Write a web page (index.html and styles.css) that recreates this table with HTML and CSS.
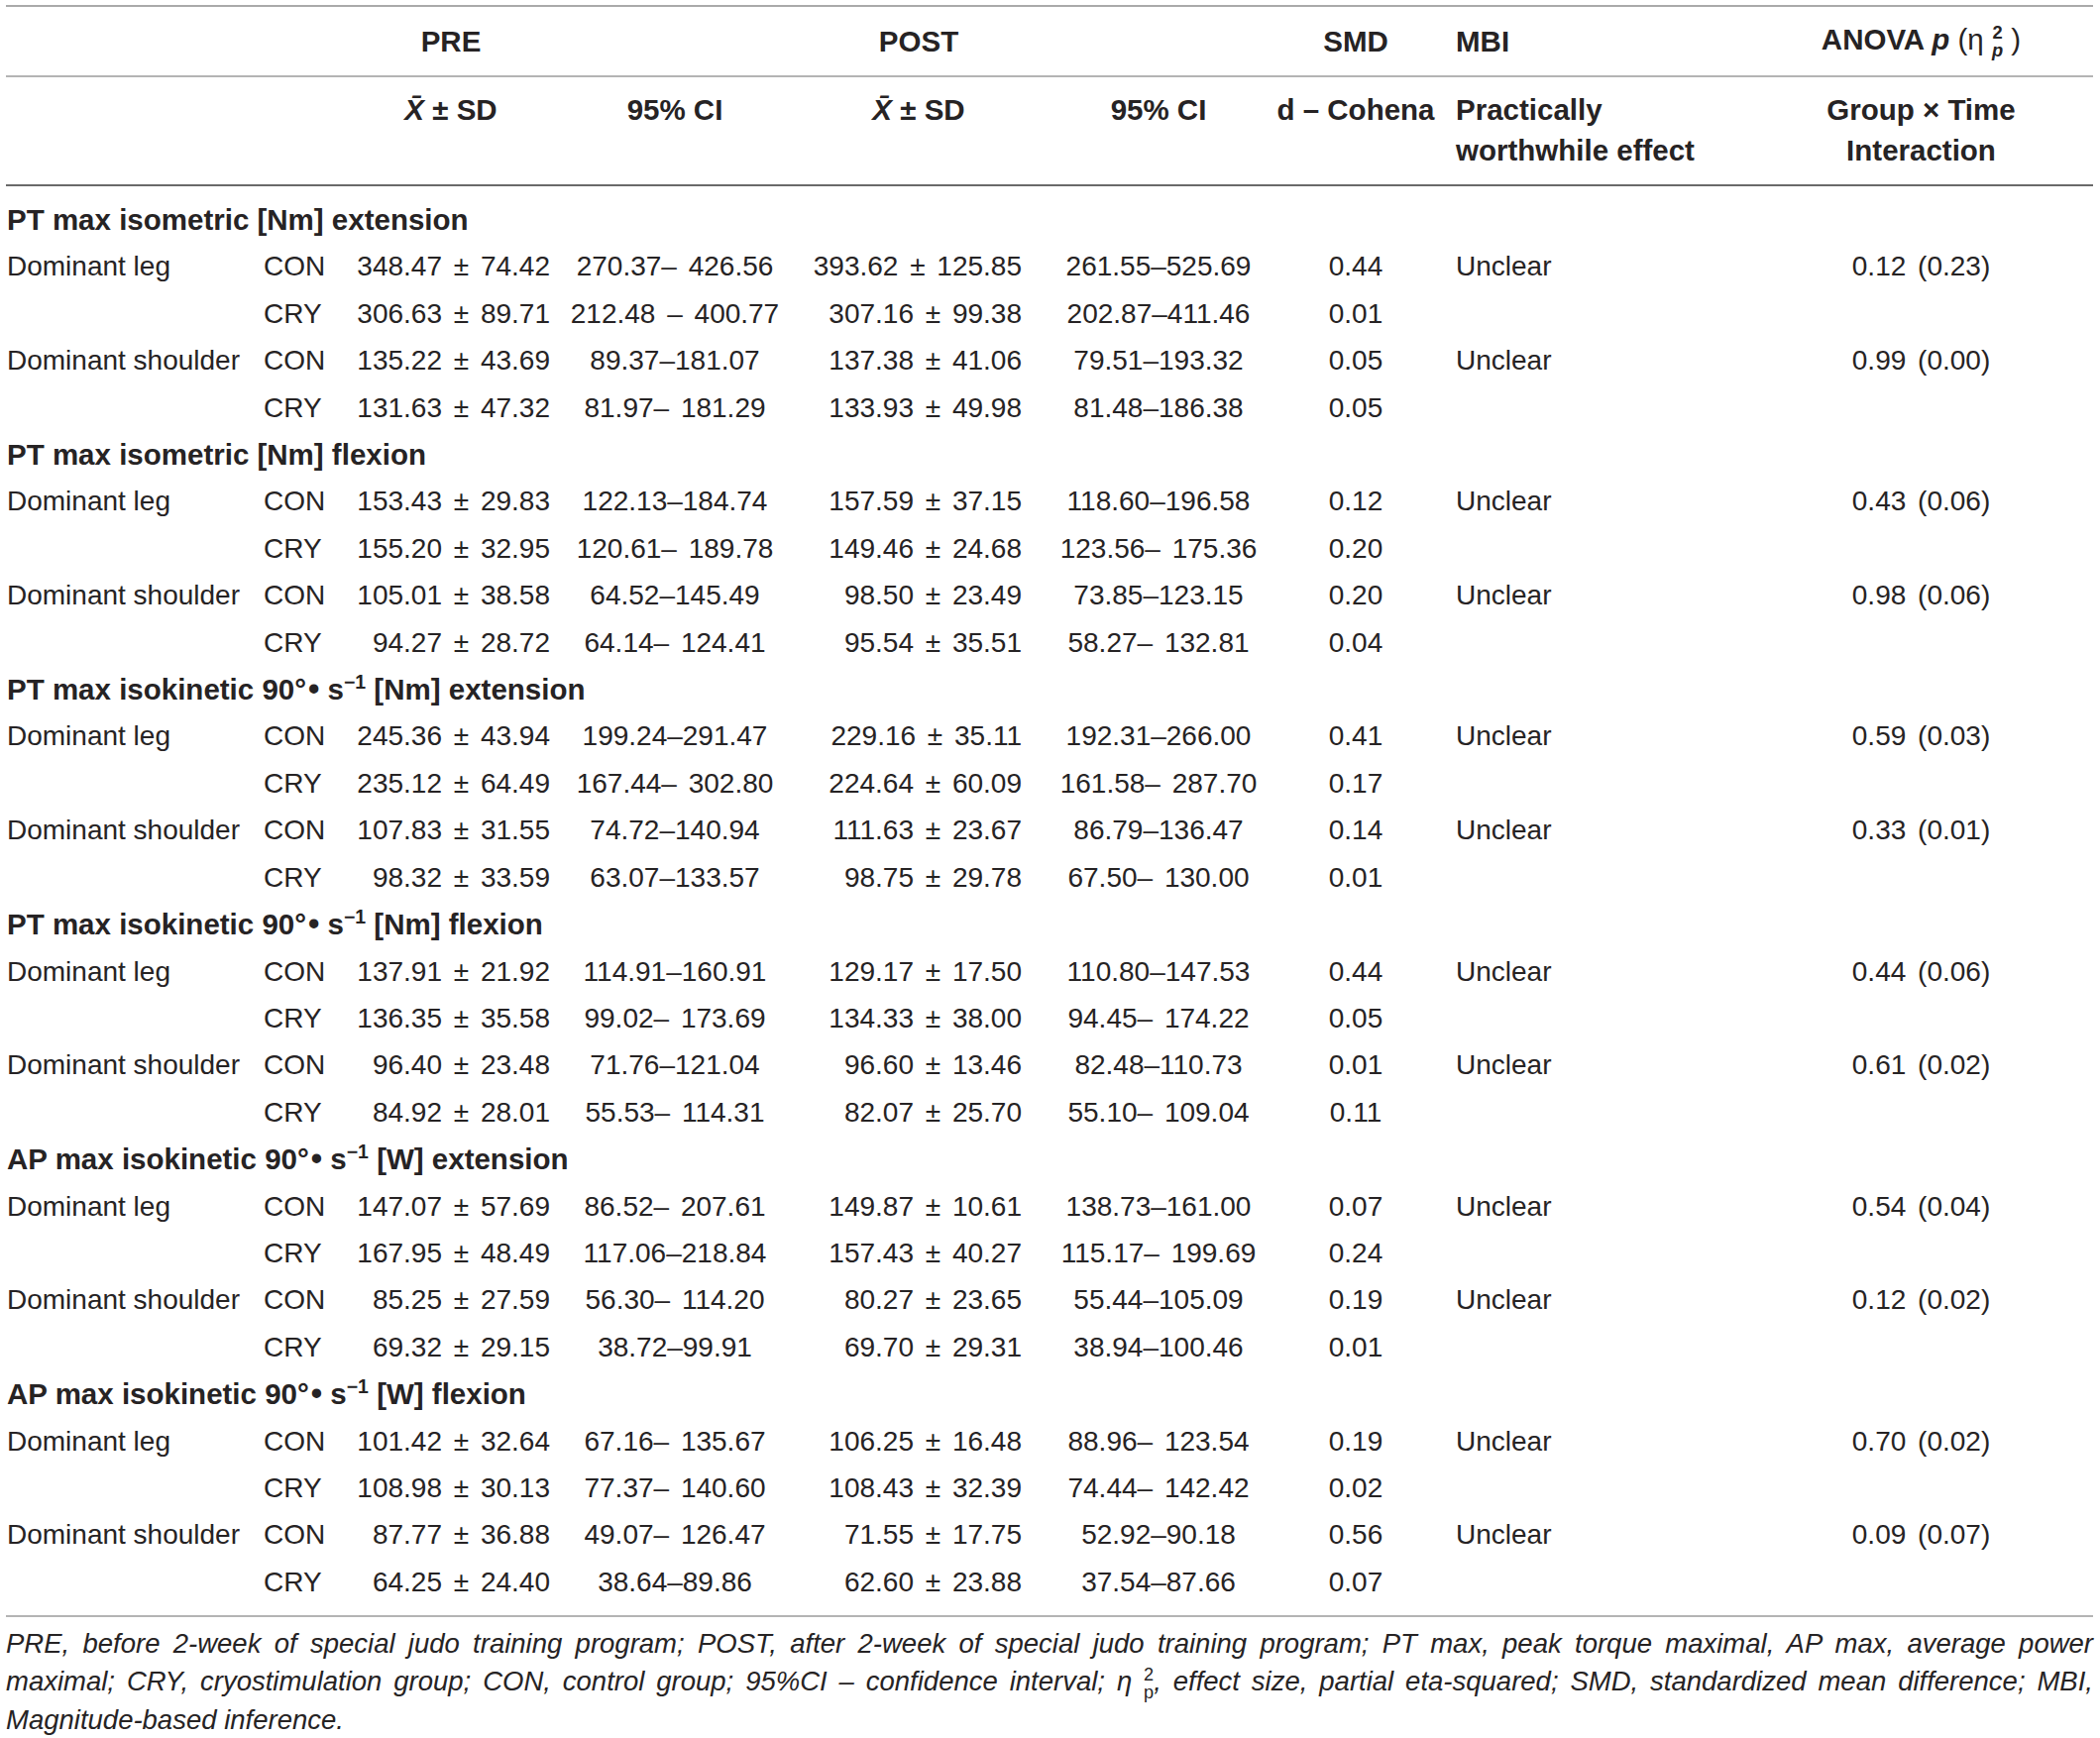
FILE: index.html
```html
<!DOCTYPE html>
<html>
<head>
  <meta charset="UTF-8">
  <title>PT and AP results</title>
  <link rel="stylesheet" href="styles.css">
</head>
<body>
  <table class="results">
    <colgroup>
      <col class="c-label"><col class="c-group"><col class="c-pre"><col class="c-preci"><col class="c-post"><col class="c-postci"><col class="c-smd"><col class="c-mbi"><col class="c-anova">
    </colgroup>
    <thead>
      <tr class="head-top">
        <th></th><th></th>
        <th class="mid">PRE</th><th></th>
        <th class="mid">POST</th><th></th>
        <th class="mid">SMD</th>
        <th class="left">MBI</th>
        <th class="mid">ANOVA <i>p</i> <span class="light">(η</span> <span class="stack"><span>2</span><i>p</i></span> <span class="light">)</span></th>
      </tr>
      <tr class="head-sub">
        <th></th><th></th>
        <th class="mid"><i class="xbar">X̄</i> ± SD</th>
        <th class="mid">95% CI</th>
        <th class="mid"><i class="xbar">X̄</i> ± SD</th>
        <th class="mid">95% CI</th>
        <th class="mid">d – Cohena</th>
        <th class="left">Practically<br>worthwhile effect</th>
        <th class="mid">Group × Time<br>Interaction</th>
      </tr>
    </thead>
    <tbody>
      <tr class="section first"><td colspan="9">PT max isometric [Nm] extension</td></tr>
      <tr><td>Dominant leg</td><td>CON</td><td>348.47 ± 74.42</td><td>270.37– 426.56</td><td>393.62 ± 125.85</td><td>261.55–525.69</td><td>0.44</td><td>Unclear</td><td>0.12 (0.23)</td></tr>
      <tr><td></td><td>CRY</td><td>306.63 ± 89.71</td><td>212.48 – 400.77</td><td>307.16 ± 99.38</td><td>202.87–411.46</td><td>0.01</td><td></td><td></td></tr>
      <tr><td>Dominant shoulder</td><td>CON</td><td>135.22 ± 43.69</td><td>89.37–181.07</td><td>137.38 ± 41.06</td><td>79.51–193.32</td><td>0.05</td><td>Unclear</td><td>0.99 (0.00)</td></tr>
      <tr><td></td><td>CRY</td><td>131.63 ± 47.32</td><td>81.97– 181.29</td><td>133.93 ± 49.98</td><td>81.48–186.38</td><td>0.05</td><td></td><td></td></tr>

      <tr class="section"><td colspan="9">PT max isometric [Nm] flexion</td></tr>
      <tr><td>Dominant leg</td><td>CON</td><td>153.43 ± 29.83</td><td>122.13–184.74</td><td>157.59 ± 37.15</td><td>118.60–196.58</td><td>0.12</td><td>Unclear</td><td>0.43 (0.06)</td></tr>
      <tr><td></td><td>CRY</td><td>155.20 ± 32.95</td><td>120.61– 189.78</td><td>149.46 ± 24.68</td><td>123.56– 175.36</td><td>0.20</td><td></td><td></td></tr>
      <tr><td>Dominant shoulder</td><td>CON</td><td>105.01 ± 38.58</td><td>64.52–145.49</td><td>98.50 ± 23.49</td><td>73.85–123.15</td><td>0.20</td><td>Unclear</td><td>0.98 (0.06)</td></tr>
      <tr><td></td><td>CRY</td><td>94.27 ± 28.72</td><td>64.14– 124.41</td><td>95.54 ± 35.51</td><td>58.27– 132.81</td><td>0.04</td><td></td><td></td></tr>

      <tr class="section"><td colspan="9">PT max isokinetic 90°<span class="dot">•</span> s<sup>−1</sup> [Nm] extension</td></tr>
      <tr><td>Dominant leg</td><td>CON</td><td>245.36 ± 43.94</td><td>199.24–291.47</td><td>229.16 ± 35.11</td><td>192.31–266.00</td><td>0.41</td><td>Unclear</td><td>0.59 (0.03)</td></tr>
      <tr><td></td><td>CRY</td><td>235.12 ± 64.49</td><td>167.44– 302.80</td><td>224.64 ± 60.09</td><td>161.58– 287.70</td><td>0.17</td><td></td><td></td></tr>
      <tr><td>Dominant shoulder</td><td>CON</td><td>107.83 ± 31.55</td><td>74.72–140.94</td><td>111.63 ± 23.67</td><td>86.79–136.47</td><td>0.14</td><td>Unclear</td><td>0.33 (0.01)</td></tr>
      <tr><td></td><td>CRY</td><td>98.32 ± 33.59</td><td>63.07–133.57</td><td>98.75 ± 29.78</td><td>67.50– 130.00</td><td>0.01</td><td></td><td></td></tr>

      <tr class="section"><td colspan="9">PT max isokinetic 90°<span class="dot">•</span> s<sup>−1</sup> [Nm] flexion</td></tr>
      <tr><td>Dominant leg</td><td>CON</td><td>137.91 ± 21.92</td><td>114.91–160.91</td><td>129.17 ± 17.50</td><td>110.80–147.53</td><td>0.44</td><td>Unclear</td><td>0.44 (0.06)</td></tr>
      <tr><td></td><td>CRY</td><td>136.35 ± 35.58</td><td>99.02– 173.69</td><td>134.33 ± 38.00</td><td>94.45– 174.22</td><td>0.05</td><td></td><td></td></tr>
      <tr><td>Dominant shoulder</td><td>CON</td><td>96.40 ± 23.48</td><td>71.76–121.04</td><td>96.60 ± 13.46</td><td>82.48–110.73</td><td>0.01</td><td>Unclear</td><td>0.61 (0.02)</td></tr>
      <tr><td></td><td>CRY</td><td>84.92 ± 28.01</td><td>55.53– 114.31</td><td>82.07 ± 25.70</td><td>55.10– 109.04</td><td>0.11</td><td></td><td></td></tr>

      <tr class="section"><td colspan="9">AP max isokinetic 90°<span class="dot">•</span> s<sup>−1</sup> [W] extension</td></tr>
      <tr><td>Dominant leg</td><td>CON</td><td>147.07 ± 57.69</td><td>86.52– 207.61</td><td>149.87 ± 10.61</td><td>138.73–161.00</td><td>0.07</td><td>Unclear</td><td>0.54 (0.04)</td></tr>
      <tr><td></td><td>CRY</td><td>167.95 ± 48.49</td><td>117.06–218.84</td><td>157.43 ± 40.27</td><td>115.17– 199.69</td><td>0.24</td><td></td><td></td></tr>
      <tr><td>Dominant shoulder</td><td>CON</td><td>85.25 ± 27.59</td><td>56.30– 114.20</td><td>80.27 ± 23.65</td><td>55.44–105.09</td><td>0.19</td><td>Unclear</td><td>0.12 (0.02)</td></tr>
      <tr><td></td><td>CRY</td><td>69.32 ± 29.15</td><td>38.72–99.91</td><td>69.70 ± 29.31</td><td>38.94–100.46</td><td>0.01</td><td></td><td></td></tr>

      <tr class="section"><td colspan="9">AP max isokinetic 90°<span class="dot">•</span> s<sup>−1</sup> [W] flexion</td></tr>
      <tr><td>Dominant leg</td><td>CON</td><td>101.42 ± 32.64</td><td>67.16– 135.67</td><td>106.25 ± 16.48</td><td>88.96– 123.54</td><td>0.19</td><td>Unclear</td><td>0.70 (0.02)</td></tr>
      <tr><td></td><td>CRY</td><td>108.98 ± 30.13</td><td>77.37– 140.60</td><td>108.43 ± 32.39</td><td>74.44– 142.42</td><td>0.02</td><td></td><td></td></tr>
      <tr><td>Dominant shoulder</td><td>CON</td><td>87.77 ± 36.88</td><td>49.07– 126.47</td><td>71.55 ± 17.75</td><td>52.92–90.18</td><td>0.56</td><td>Unclear</td><td>0.09 (0.07)</td></tr>
      <tr class="last"><td></td><td>CRY</td><td>64.25 ± 24.40</td><td>38.64–89.86</td><td>62.60 ± 23.88</td><td>37.54–87.66</td><td>0.07</td><td></td><td></td></tr>
    </tbody>
  </table>

  <div class="notes">
    <span class="line">PRE, before 2-week of special judo training program; POST, after 2-week of special judo training program; PT max, peak torque maximal, AP max, average power</span>
    <span class="line">maximal; CRY, cryostimulation group; CON, control group; 95%CI – confidence interval; η <span class="stack"><span>2</span><span>p</span></span>, effect size, partial eta-squared; SMD, standardized mean difference; MBI,</span>
    <span class="line end">Magnitude-based inference.</span>
  </div>
</body>
</html>
```

FILE: styles.css
```css
body {
  margin: 0;
  padding: 5px 7px 0 6px;
  font-family: "Liberation Sans", Arial, sans-serif;
  color: #262324;
  background: #fff;
}

.results {
  width: 2106px;
  border-collapse: collapse;
  table-layout: fixed;
  font-size: 28px;
}

.c-label { width: 252px; }
.c-group { width: 87px; }
.c-pre { width: 220px; }
.c-preci { width: 232px; }
.c-post { width: 260px; }
.c-postci { width: 224px; }
.c-smd { width: 174px; }
.c-mbi { width: 310px; }
.c-anova { width: 347px; }

th {
  font-weight: bold;
  font-size: 29.5px;
  padding: 0;
  white-space: nowrap;
}
th.mid { text-align: center; }
th.left { text-align: left; padding-left: 14px; }

.head-top th {
  height: 69px;
  border-top: 2px solid #aaaaaa;
  border-bottom: 2px solid #b4b4b4;
  vertical-align: middle;
}
.head-sub th {
  vertical-align: top;
  line-height: 41px;
  padding-top: 12px;
  padding-bottom: 14px;
  border-bottom: 2px solid #6a6a6a;
}

.light { font-weight: normal; }
.xbar { font-style: italic; }

.stack {
  display: inline-flex;
  flex-direction: column;
  align-items: center;
  font-size: 0.62em;
  line-height: 1;
  vertical-align: middle;
}

td {
  padding: 0;
  line-height: 47.4px;
  white-space: nowrap;
  word-spacing: 4px;
}
td:nth-child(1) { padding-left: 1px; word-spacing: 0; }
td:nth-child(2) { padding-left: 8px; }
td:nth-child(3) { text-align: right; padding-right: 10px; }
td:nth-child(4) { text-align: center; }
td:nth-child(5) { text-align: right; padding-right: 26px; }
td:nth-child(6) { text-align: center; }
td:nth-child(7) { text-align: center; }
td:nth-child(8) { padding-left: 14px; }
td:nth-child(9) { text-align: center; }

.section td {
  font-weight: bold;
  font-size: 29.5px;
  text-align: left;
  word-spacing: 0;
  padding: 0 0 0 1px;
}
.section.first td { padding-top: 10px; }
.last td {
  padding-bottom: 10px;
}
tbody { border-bottom: 2px solid #b4b4b4; }

.section sup {
  font-size: 0.66em;
  line-height: 0;
  vertical-align: 0.55em;
}
.dot {
  margin-left: 2px;
  font-size: 1.1em;
}

.notes {
  margin-top: 8px;
  font-style: italic;
  font-size: 27.5px;
  line-height: 37.8px;
}
.notes .line {
  display: block;
  text-align: justify;
  text-align-last: justify;
  white-space: nowrap;
}
.notes .line.end { text-align-last: left; }
.notes .stack {
  font-style: normal;
  font-size: 0.66em;
  line-height: 1;
}
```
